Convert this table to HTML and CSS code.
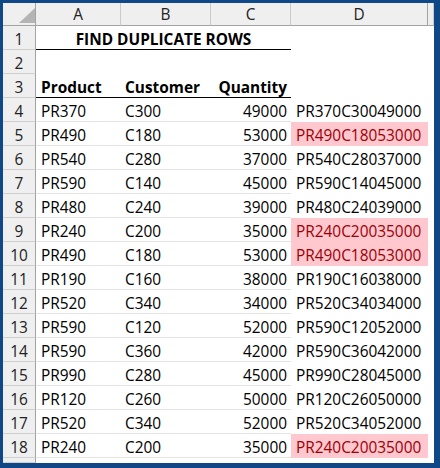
FILE: index.html
```html
<!DOCTYPE html>
<html>
<head>
<meta charset="utf-8">
<link rel="stylesheet" href="styles.css">
</head>
<body>
<div class="sheet">
  <div class="row head">
    <div class="corner"><svg width="16" height="15" viewBox="0 0 16 15"><polygon points="16,0 16,15 0,15" fill="#b4b4b4"/></svg></div>
    <div class="ch">A</div><div class="ch">B</div><div class="ch">C</div><div class="ch">D</div><div class="ch last"></div>
  </div>
  <div class="row">
    <div class="rh">1</div><div class="title">FIND DUPLICATE ROWS</div><div class="c"></div><div class="c"></div>
  </div>
  <div class="row">
    <div class="rh">2</div><div class="c"></div><div class="c"></div><div class="c"></div><div class="c"></div><div class="c"></div>
  </div>
  <div class="row">
    <div class="rh">3</div><div class="c a hd">Product</div><div class="c b hd">Customer</div><div class="c n hd">Quantity</div><div class="c"></div><div class="c"></div>
  </div>
  <div class="row data"><div class="rh">4</div><div class="c a">PR370</div><div class="c b">C300</div><div class="c n">49000</div><div class="c d">PR370C30049000</div><div class="c"></div></div>
  <div class="row data"><div class="rh">5</div><div class="c a">PR490</div><div class="c b">C180</div><div class="c n">53000</div><div class="c d dup">PR490C18053000</div><div class="c"></div></div>
  <div class="row data"><div class="rh">6</div><div class="c a">PR540</div><div class="c b">C280</div><div class="c n">37000</div><div class="c d">PR540C28037000</div><div class="c"></div></div>
  <div class="row data"><div class="rh">7</div><div class="c a">PR590</div><div class="c b">C140</div><div class="c n">45000</div><div class="c d">PR590C14045000</div><div class="c"></div></div>
  <div class="row data"><div class="rh">8</div><div class="c a">PR480</div><div class="c b">C240</div><div class="c n">39000</div><div class="c d">PR480C24039000</div><div class="c"></div></div>
  <div class="row data"><div class="rh">9</div><div class="c a">PR240</div><div class="c b">C200</div><div class="c n">35000</div><div class="c d dup">PR240C20035000</div><div class="c"></div></div>
  <div class="row data"><div class="rh">10</div><div class="c a">PR490</div><div class="c b">C180</div><div class="c n">53000</div><div class="c d dup">PR490C18053000</div><div class="c"></div></div>
  <div class="row data"><div class="rh">11</div><div class="c a">PR190</div><div class="c b">C160</div><div class="c n">38000</div><div class="c d">PR190C16038000</div><div class="c"></div></div>
  <div class="row data"><div class="rh">12</div><div class="c a">PR520</div><div class="c b">C340</div><div class="c n">34000</div><div class="c d">PR520C34034000</div><div class="c"></div></div>
  <div class="row data"><div class="rh">13</div><div class="c a">PR590</div><div class="c b">C120</div><div class="c n">52000</div><div class="c d">PR590C12052000</div><div class="c"></div></div>
  <div class="row data"><div class="rh">14</div><div class="c a">PR590</div><div class="c b">C360</div><div class="c n">42000</div><div class="c d">PR590C36042000</div><div class="c"></div></div>
  <div class="row data"><div class="rh">15</div><div class="c a">PR990</div><div class="c b">C280</div><div class="c n">45000</div><div class="c d">PR990C28045000</div><div class="c"></div></div>
  <div class="row data"><div class="rh">16</div><div class="c a">PR120</div><div class="c b">C260</div><div class="c n">50000</div><div class="c d">PR120C26050000</div><div class="c"></div></div>
  <div class="row data"><div class="rh">17</div><div class="c a">PR520</div><div class="c b">C340</div><div class="c n">52000</div><div class="c d">PR520C34052000</div><div class="c"></div></div>
  <div class="row data"><div class="rh">18</div><div class="c a">PR240</div><div class="c b">C200</div><div class="c n">35000</div><div class="c d dup">PR240C20035000</div><div class="c"></div></div>
  <div class="row tail"><div class="rh"></div><div class="c"></div><div class="c"></div><div class="c"></div><div class="c"></div><div class="c"></div></div>
</div>
</body>
</html>
```
FILE: styles.css
```css
html, body { margin: 0; padding: 0; background: #ffffff; }
.sheet {
  width: 440px;
  height: 468px;
  box-sizing: border-box;
  border-style: solid;
  border-color: #104887;
  border-width: 3px 6px 5px 3px;
  background: #ffffff;
  font-family: "Open Sans", "Noto Sans", sans-serif;
  font-size: 15.4px;
  color: #000000;
  overflow: hidden;
}
.row {
  display: grid;
  grid-template-columns: 33px 85px 90px 80px 137px 6px;
  height: 24px;
}
.row > div {
  box-sizing: border-box;
  height: 24px;
  line-height: 20px;
  padding-top: 4px;
  white-space: nowrap;
  overflow: hidden;
}
.row.head { height: 23px; }
.row.head > div {
  height: 23px;
  background: #efefef;
  border-bottom: 1px solid #a3a3a3;
  color: #222;
  text-align: center;
  padding-top: 2px;
}
.row.head .ch { border-right: 1px solid #c9c9c9; }
.row.head .ch:nth-child(5) { border-right-color: #a3a3a3; }
.row.head .corner {
  border-right: 1px solid #a3a3a3;
  display: flex;
  justify-content: flex-end;
  align-items: flex-end;
  padding: 0 0 2px 0;
}
.row.head .corner svg { display: block; }
.rh {
  background: #efefef;
  border-right: 1px solid #a3a3a3;
  border-bottom: 1px solid #cfcfcf;
  text-align: center;
  color: #222;
}
.row .title {
  grid-column: 2 / span 3;
  font-weight: bold;
  text-align: center;
  border-bottom: 1px solid #000;
}
.row > .c.hd { font-weight: bold; border-bottom: 1px solid #000; }
.a { padding-left: 5px; }
.b { padding-left: 4px; }
.n { text-align: right; padding-right: 4px; }
.d { padding-left: 5px; }
.row.data > .a, .row.data > .b, .row.data > .n { border-bottom: 1px solid #e3e3e3; }
.dup { background: #ffc7ce; color: #9c0006; }
.row.tail { height: 5px; }
.row.tail > div { height: 5px; padding: 0; }
.row.tail > .c:nth-child(2), .row.tail > .c:nth-child(3), .row.tail > .c:nth-child(4) { border-bottom: none; }
```
